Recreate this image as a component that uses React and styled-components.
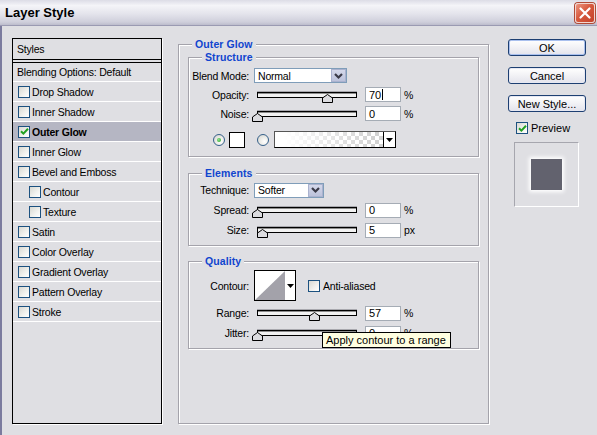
import React from 'react'
import styled, { createGlobalStyle } from 'styled-components'

const GlobalStyle = createGlobalStyle`
  html, body { margin: 0; padding: 0; background: #dfdfe3; }
  body { font-family: 'Liberation Sans', Arial, sans-serif; font-size: 10.5px; letter-spacing: -0.2px; color: #000; }
  * { box-sizing: border-box; }
`

const Window = styled.div`
  width: 597px;
  height: 435px;
  overflow: hidden;
  display: flex;
  flex-direction: column;
  background: #dfdfe3;
`

const TitleBar = styled.div`
  height: 26px;
  flex: none;
  display: flex;
  align-items: center;
  justify-content: space-between;
  padding: 0 2px 0 5px;
  background: linear-gradient(#dcdce6 0%, #f4f4f8 22%, #e4e4ec 55%, #cfcfdb 88%, #bcbccc 100%);
  border-bottom: 1px solid #9a9ab2;
`

const Title = styled.div`
  font-size: 13px;
  font-weight: bold;
  letter-spacing: 0;
`

const CloseButton = styled.div`
  width: 20px;
  height: 20px;
  border-radius: 3px;
  border: 1px solid #f2d6cf;
  box-shadow: 0 0 0 1px #b04a36;
  background: linear-gradient(135deg, #ec9580 0%, #d7593e 45%, #c3432b 100%);
  display: flex;
  align-items: center;
  justify-content: center;
`

const Body = styled.div`
  flex: 1;
  min-height: 0;
  display: flex;
  padding: 12px 0 11px 10px;
  border-left: 2px solid #7b7b9e;
`

/* ---- styles list ---- */

const StylesList = styled.div`
  width: 150px;
  flex: none;
  border: 1px solid #000;
  box-shadow: 1px 1px 0 #fff;
  display: flex;
  flex-direction: column;
`

const ListHeader = styled.div`
  height: 24px;
  padding-left: 4px;
  display: flex;
  align-items: center;
  border-bottom: 4px double #000;
`

const BlendRow = styled.div`
  height: 19px;
  padding-left: 4px;
  display: flex;
  align-items: center;
  border-bottom: 1px solid #fff;
`

const StyleRow = styled.div`
  height: 20px;
  padding-left: ${p => (p.$sub ? 16 : 5)}px;
  display: flex;
  align-items: center;
  gap: 2px;
  border-bottom: 1px solid #fff;
  background: ${p => (p.$active ? '#b5b6c3' : 'transparent')};
  font-weight: ${p => (p.$active ? 'bold' : 'normal')};
`

const Box = styled.span`
  width: 12px;
  height: 12px;
  flex: none;
  border: 1px solid #1c5180;
  background: linear-gradient(135deg, #d8d8d2 0%, #f2f2ef 60%, #fff 100%);
  display: inline-flex;
  align-items: center;
  justify-content: center;
`

const Check = ({ checked }) => (
  <Box>
    {checked && (
      <svg width="9" height="9" viewBox="0 0 9 9">
        <path d="M1 4.2 L3.4 6.6 L8 1.8" fill="none" stroke="#21a121" strokeWidth="2" />
      </svg>
    )}
  </Box>
)

/* ---- main panel ---- */

const Group = styled.fieldset`
  margin: ${p => p.$mt || 0}px 0 0;
  padding: ${p => p.$pt || 0}px ${p => p.$px || 0}px ${p => p.$pb || 0}px;
  border: 1px solid #a4a3ab;
  box-shadow: 1px 1px 0 #fff, inset 1px 1px 0 #fff;
  min-width: 0;
`

const OuterGroup = styled(Group)`
  width: 311px;
  flex: none;
  margin-left: 16px;
`

const Legend = styled.legend`
  margin-left: ${p => p.$ml}px;
  padding: 0 3px;
  line-height: 13px;
  font-weight: bold;
  letter-spacing: 0.1px;
  color: #1045cf;
  background: #dfdfe3;
`

const Row = styled.div`
  position: relative;
  height: ${p => p.$h || 19}px;
  margin-top: ${p => p.$mt || 0}px;
  display: flex;
  align-items: center;
`

const Label = styled.span`
  width: 60px;
  flex: none;
  text-align: right;
`

const Select = styled.div`
  width: ${p => p.$w}px;
  height: 15px;
  margin-left: 5px;
  border: 1px solid #7f9db9;
  background: #fff;
  display: flex;
  align-items: center;
  justify-content: space-between;
  padding-left: 3px;
`

const SelectButton = styled.span`
  width: 15px;
  height: 13px;
  background: linear-gradient(#d4d8ea, #bcc2db);
  border: 1px solid #aab2cf;
  display: flex;
  align-items: center;
  justify-content: center;
`

const Track = styled.div`
  position: relative;
  width: 100px;
  height: 6px;
  margin-left: 8px;
  border: 1px solid #000;
  background: #f2f2f2;
  box-shadow: inset 0 1px 0 #8c8c8c, 0 -1px 0 #a8a8ae;
`

const Thumb = styled.svg`
  position: absolute;
  top: 1px;
  width: 11px;
  height: 9px;
`

const Field = styled.div`
  width: 36px;
  height: 15px;
  margin-left: 8px;
  border: 1px solid #a5acb5;
  background: #fff;
  padding-left: 3px;
  display: flex;
  align-items: center;
  font-size: 11px;
`

const Caret = styled.span`
  width: 1px;
  height: 11px;
  margin-left: 1px;
  background: #000;
`

const Unit = styled.span`
  margin-left: 3px;
`

const Radio = styled.span`
  width: 12px;
  height: 12px;
  flex: none;
  margin-left: ${p => p.$ml}px;
  border-radius: 50%;
  border: 1px solid #35608a;
  background: radial-gradient(circle at 65% 65%, #fff 0%, #ecece8 45%, #cfcfca 100%);
  display: flex;
  align-items: center;
  justify-content: center;
  &::after {
    content: '';
    display: ${p => (p.$on ? 'block' : 'none')};
    width: 4px;
    height: 4px;
    border-radius: 50%;
    background: radial-gradient(circle at 40% 40%, #8ee38e, #1f9d1f);
  }
`

const Swatch = styled.span`
  width: 16px;
  height: 16px;
  margin-left: 4px;
  border: 1px solid #000;
  background: #fff;
`

const GradientPicker = styled.div`
  width: 122px;
  height: 17px;
  margin-left: 5px;
  border: 1px solid #000;
  border-top-color: #555;
  border-left-color: #555;
  display: flex;
`

const GradientFill = styled.div`
  flex: 1;
  background:
    linear-gradient(to right, #fff 8%, rgba(255, 255, 255, 0) 92%),
    repeating-conic-gradient(#d2d2d2 0 25%, #fff 0 50%) 0 0 / 8px 8px;
`

const PickerArrow = styled.div`
  width: 12px;
  flex: none;
  border-left: 1px solid #000;
  background: #fff;
  display: flex;
  align-items: center;
  justify-content: center;
`

const ContourPicker = styled.div`
  width: 42px;
  height: 31px;
  margin-left: 5px;
  border: 1px solid #000;
  background: #fff;
  display: flex;
`

const ContourArrow = styled.div`
  flex: 1;
  display: flex;
  align-items: center;
  justify-content: center;
`

const CheckLabel = styled.label`
  display: flex;
  align-items: center;
  gap: 3px;
  margin-left: ${p => p.$ml || 0}px;
`

const Tooltip = styled.div`
  position: absolute;
  left: 133px;
  top: 9px;
  width: 129px;
  height: 16px;
  padding-left: 3px;
  border: 1px solid #000;
  background: #ffffe1;
  font-size: 11px;
  letter-spacing: 0;
  line-height: 14px;
  white-space: nowrap;
`

/* ---- right column ---- */

const Side = styled.div`
  width: 78px;
  flex: none;
  margin-left: 19px;
  display: flex;
  flex-direction: column;
`

const Button = styled.div`
  height: 17px;
  margin-top: ${p => p.$mt}px;
  border: 1px solid #1d3f72;
  border-radius: 3px;
  background: linear-gradient(#ffffff 0%, #f3f3f6 45%, #e3e3ec 100%);
  box-shadow: inset 0 0 0 1px ${p => (p.$default ? '#a9c0ee' : '#e6e8f2')};
  font-size: 11px;
  letter-spacing: 0;
  display: flex;
  align-items: center;
  justify-content: center;
`

const PreviewCheck = styled(CheckLabel)`
  margin-top: 9px;
  height: 14px;
  font-size: 11px;
  letter-spacing: 0;
`

const PreviewBox = styled.div`
  width: 65px;
  height: 65px;
  margin: 7px 0 0 6px;
  border: 1px solid #a6a6ae;
  border-right-color: #fff;
  border-bottom-color: #fff;
  display: flex;
  align-items: center;
  justify-content: center;
`

const PreviewSquare = styled.div`
  width: 31px;
  height: 31px;
  background: #62626e;
  box-shadow: 0 0 4px 2px #fff;
`

const Chevron = () => (
  <svg width="11" height="8" viewBox="0 0 11 8">
    <polyline points="2,2 5.5,5.5 9,2" fill="none" stroke="#3a3a48" strokeWidth="2.2" />
  </svg>
)

const DownTri = () => (
  <svg width="7" height="4" viewBox="0 0 7 4">
    <polygon points="0,0 7,0 3.5,4" fill="#000" />
  </svg>
)

const Slider = ({ value }) => (
  <Track>
    <Thumb viewBox="0 0 11 9" style={{ left: value - 6 }}>
      <polygon points="5.5,0.5 10.5,4 10.5,8.5 0.5,8.5 0.5,4" fill="#dcdce0" stroke="#000" strokeWidth="1" />
    </Thumb>
  </Track>
)

const SliderRow = ({ label, value, unit = '%', h, caret, children }) => (
  <Row $h={h}>
    <Label>{label}</Label>
    <Slider value={value} />
    <Field>
      {String(value)}
      {caret && <Caret />}
    </Field>
    <Unit>{unit}</Unit>
    {children}
  </Row>
)

const styleItems = [
  { name: 'Drop Shadow' },
  { name: 'Inner Shadow' },
  { name: 'Outer Glow', active: true, checked: true },
  { name: 'Inner Glow' },
  { name: 'Bevel and Emboss' },
  { name: 'Contour', sub: true },
  { name: 'Texture', sub: true },
  { name: 'Satin' },
  { name: 'Color Overlay' },
  { name: 'Gradient Overlay' },
  { name: 'Pattern Overlay' },
  { name: 'Stroke' },
]

export default function App() {
  return (
    <Window>
      <GlobalStyle />
      <TitleBar>
        <Title>Layer Style</Title>
        <CloseButton>
          <svg width="12" height="12" viewBox="0 0 12 12">
            <path d="M1.5 1.5 L10.5 10.5 M10.5 1.5 L1.5 10.5" stroke="#fff" strokeWidth="2.2" strokeLinecap="round" />
          </svg>
        </CloseButton>
      </TitleBar>

      <Body>
        <StylesList>
          <ListHeader>Styles</ListHeader>
          <BlendRow>Blending Options: Default</BlendRow>
          {styleItems.map(item => (
            <StyleRow key={item.name} $sub={item.sub} $active={item.active}>
              <Check checked={item.checked} />
              {item.name}
            </StyleRow>
          ))}
        </StylesList>

        <OuterGroup $px={9}>
          <Legend $ml={4}>Outer Glow</Legend>

          <Group $pt={2} $pb={8}>
            <Legend $ml={13}>Structure</Legend>
            <Row>
              <Label>Blend Mode:</Label>
              <Select $w={93}>
                Normal
                <SelectButton><Chevron /></SelectButton>
              </Select>
            </Row>
            <SliderRow label="Opacity:" value={70} caret />
            <SliderRow label="Noise:" value={0} />
            <Row $h={17} $mt={8}>
              <Radio $ml={24} $on />
              <Swatch />
              <Radio $ml={12} />
              <GradientPicker>
                <GradientFill />
                <PickerArrow><DownTri /></PickerArrow>
              </GradientPicker>
            </Row>
          </Group>

          <Group $mt={10} $pb={5}>
            <Legend $ml={13}>Elements</Legend>
            <Row $h={20}>
              <Label>Technique:</Label>
              <Select $w={70}>
                Softer
                <SelectButton><Chevron /></SelectButton>
              </Select>
            </Row>
            <SliderRow label="Spread:" value={0} h={20} />
            <SliderRow label="Size:" value={5} unit="px" h={20} />
          </Group>

          <Group $mt={9} $pb={5}>
            <Legend $ml={13}>Quality</Legend>
            <Row $h={31} $mt={2}>
              <Label>Contour:</Label>
              <ContourPicker>
                <svg width="30" height="29" viewBox="0 0 30 29">
                  <polygon points="0,29 30,0 30,29" fill="#a3a2aa" />
                </svg>
                <ContourArrow><DownTri /></ContourArrow>
              </ContourPicker>
              <CheckLabel $ml={12}>
                <Check />
                Anti-aliased
              </CheckLabel>
            </Row>
            <Row $h={2} />
            <SliderRow label="Range:" value={57} h={20} />
            <SliderRow label="Jitter:" value={0} h={20}>
              <Tooltip>Apply contour to a range</Tooltip>
            </SliderRow>
          </Group>
        </OuterGroup>

        <Side>
          <Button $mt={1} $default>OK</Button>
          <Button $mt={11}>Cancel</Button>
          <Button $mt={11}>New Style...</Button>
          <PreviewCheck $ml={8}>
            <Check checked />
            Preview
          </PreviewCheck>
          <PreviewBox>
            <PreviewSquare />
          </PreviewBox>
        </Side>
      </Body>
    </Window>
  )
}
